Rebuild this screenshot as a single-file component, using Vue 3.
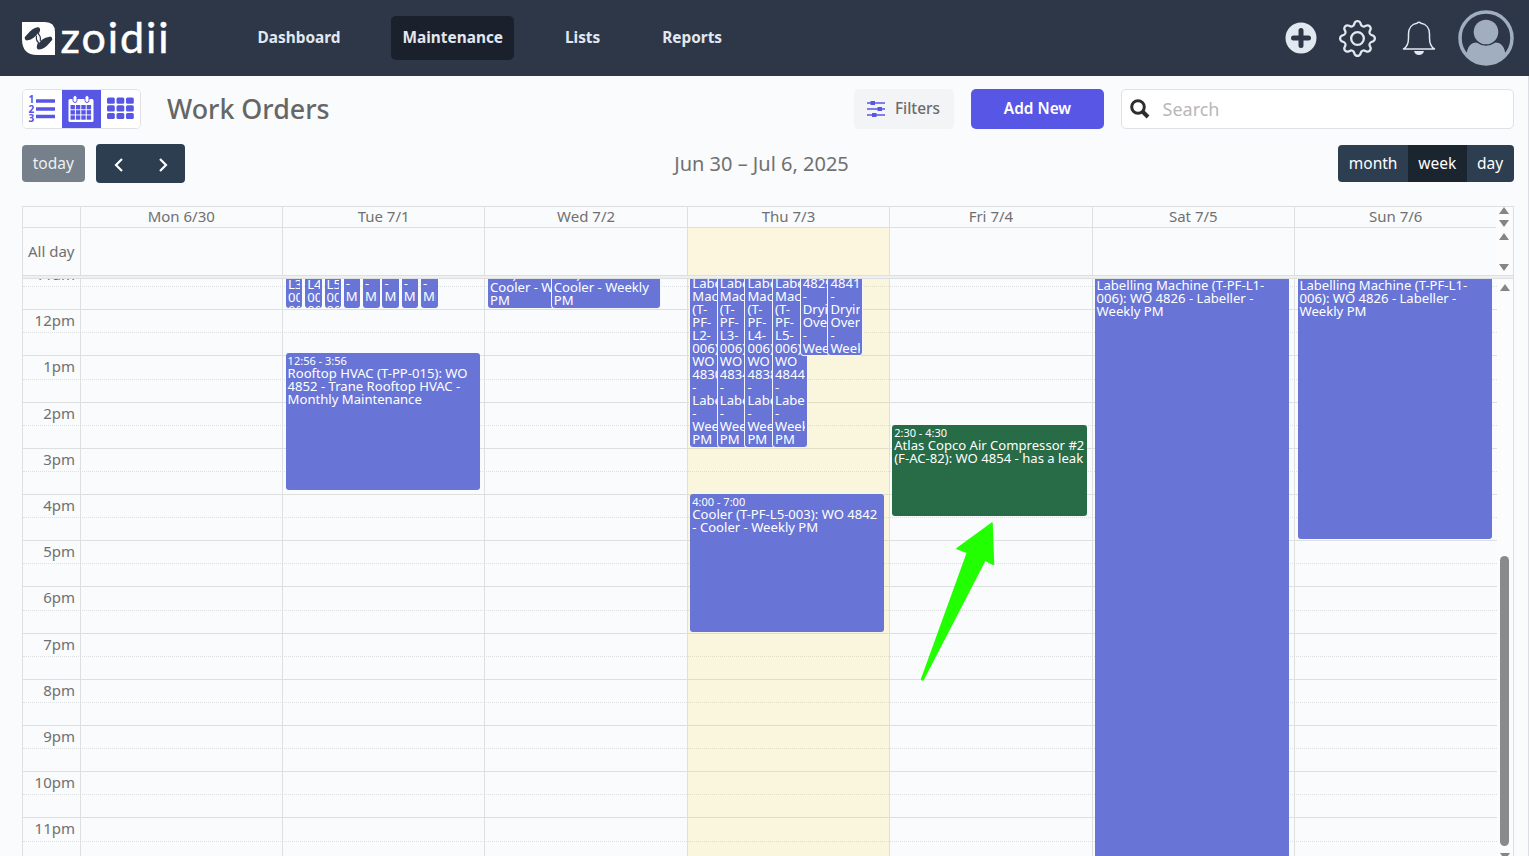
<template>
  <div class="page">
    <header class="topbar">
      <div class="logo">
        <svg class="logo-mark" viewBox="0 0 33 33">
          <path d="M0 0H23Q33 0 33 10V33H15Q0 33 0 17Z" fill="#fff" />
          <g fill="none" stroke="#2d3748" stroke-linecap="round" stroke-linejoin="round">
            <path d="M5 16C8 13.500 10 8.500 15.800 7.500C13 11 11.500 15.500 5 16" stroke-width="4.600" />
            <path d="M28 17C25 19.500 23 24.500 17 25.300C19.500 21.500 21.500 17.500 28 17" stroke-width="4.600" />
            <path d="M17.500 8L16.200 12Q19 14 18.300 18.500M15.500 24L16.500 20.500Q13.700 18.500 14.500 14" stroke-width="1.200" />
          </g>
        </svg>
        <span class="logo-text">zoidii</span>
      </div>
      <nav class="nav">
        <a v-for="item in navItems" :key="item" class="nav-item" :class="{ active: item === 'Maintenance' }">{{ item }}</a>
      </nav>
      <div class="top-icons">
        <svg class="icon-plus" viewBox="0 0 32 32">
          <circle cx="16" cy="16" r="15.500" fill="#e2e8f0" />
          <path d="M16 8.500V23.500M8.500 16H23.500" stroke="#2d3748" stroke-width="5" stroke-linecap="round" />
        </svg>
        <svg class="icon-gear" viewBox="0 0 16 16" fill="#e2e8f0">
          <path d="M8 4.754a3.246 3.246 0 1 0 0 6.492 3.246 3.246 0 0 0 0-6.492M5.754 8a2.246 2.246 0 1 1 4.492 0 2.246 2.246 0 0 1-4.492 0" />
          <path d="M9.796 1.343c-.527-1.790-3.065-1.790-3.592 0l-.094.319a.873.873 0 0 1-1.255.520l-.292-.160c-1.640-.892-3.433.902-2.540 2.541l.159.292a.873.873 0 0 1-.520 1.255l-.319.094c-1.790.527-1.790 3.065 0 3.592l.319.094a.873.873 0 0 1 .520 1.255l-.160.292c-.892 1.640.901 3.434 2.541 2.540l.292-.159a.873.873 0 0 1 1.255.520l.094.319c.527 1.790 3.065 1.790 3.592 0l.094-.319a.873.873 0 0 1 1.255-.520l.292.160c1.640.893 3.434-.902 2.540-2.541l-.159-.292a.873.873 0 0 1 .520-1.255l.319-.094c1.790-.527 1.790-3.065 0-3.592l-.319-.094a.873.873 0 0 1-.520-1.255l.160-.292c.893-1.640-.902-3.433-2.541-2.540l-.292.159a.873.873 0 0 1-1.255-.520zm-2.633.283c.246-.835 1.428-.835 1.674 0l.094.319a1.873 1.873 0 0 0 2.693 1.115l.291-.160c.764-.415 1.600.420 1.184 1.185l-.159.292a1.873 1.873 0 0 0 1.116 2.692l.318.094c.835.246.835 1.428 0 1.674l-.319.094a1.873 1.873 0 0 0-1.115 2.693l.160.291c.415.764-.420 1.600-1.185 1.184l-.291-.159a1.873 1.873 0 0 0-2.693 1.116l-.094.318c-.246.835-1.428.835-1.674 0l-.094-.319a1.873 1.873 0 0 0-2.692-1.115l-.292.160c-.764.415-1.600-.420-1.184-1.185l.159-.291A1.873 1.873 0 0 0 1.945 8.930l-.319-.094c-.835-.246-.835-1.428 0-1.674l.319-.094A1.873 1.873 0 0 0 3.060 4.377l-.160-.292c-.415-.764.420-1.600 1.185-1.184l.292.159a1.873 1.873 0 0 0 2.692-1.115z" />
        </svg>
        <svg class="icon-bell" viewBox="0 0 34 34">
          <path d="M1.500 28C5 26 6.500 23 6.500 17V13C6.500 7 10 3 15 2.300Q17 0 19 2.300C24 3 27.500 7 27.500 13V17C27.500 23 29 26 32.500 28Z" fill="none" stroke="#e2e8f0" stroke-width="1.500" stroke-linejoin="round" />
          <path d="M12 30H22Q21 34 17 34T12 30Z" fill="#e2e8f0" />
        </svg>
        <svg class="avatar" viewBox="0 0 56 56">
          <circle cx="28" cy="28" r="26" fill="none" stroke="#a0aec0" stroke-width="3.500" />
          <circle cx="28" cy="22" r="12.300" fill="#a0aec0" />
          <path d="M8.500 45C9 37 13 32.500 18.500 32.500Q28 39 37.500 32.500C43 32.500 47 37 47.500 45Q39 54 28 54T8.500 45Z" fill="#a0aec0" />
        </svg>
      </div>
    </header>

    <section class="toolbar">
      <div class="view-switch">
        <button class="view-btn">
          <svg class="view-icon" viewBox="0 0 28 28">
            <g fill="#5856e5" font-size="10" font-weight="700" font-family="Noto Sans, sans-serif">
              <text x="0.500" y="8">1</text>
              <text x="0.500" y="17.500">2</text>
              <text x="0.500" y="27">3</text>
            </g>
            <path d="M8 6H27M8 14H27M8 21.500H27" stroke="#5856e5" stroke-width="3.400" />
          </svg>
        </button>
        <button class="view-btn selected">
          <svg class="view-icon" viewBox="0 0 28 28">
            <rect x="1.500" y="4" width="25" height="23" rx="1.500" fill="#fff" />
            <rect x="6" y="0.500" width="4" height="7" rx="2" fill="#fff" stroke="#5856e5" />
            <rect x="18" y="0.500" width="4" height="7" rx="2" fill="#fff" stroke="#5856e5" />
            <g fill="#5856e5">
              <template v-for="r in 3" :key="r">
                <rect v-for="c in 4" :key="c" :x="c * 5.400 - 1.900" :y="r * 5.200 + 4.800" width="4.400" height="4.300" />
              </template>
            </g>
          </svg>
        </button>
        <button class="view-btn">
          <svg class="view-icon" viewBox="0 0 28 28" fill="#5856e5">
            <template v-for="r in 3" :key="r">
              <rect v-for="c in 3" :key="c" :x="c * 9.500 - 8.500" :y="r * 7.700 - 5.200" width="7.800" height="6.200" rx="1.500" />
            </template>
          </svg>
        </button>
      </div>
      <h1 class="title">Work Orders</h1>
      <button class="filters">
        <svg class="filter-icon" viewBox="0 0 18 18">
          <path d="M0 3H18M0 9H18M0 15H18" stroke="#5856e5" stroke-width="1.300" />
          <path d="M3.500 1H8V5H3.500ZM10.500 7H15V11H10.500ZM5 13H9.500V17H5Z" fill="#5856e5" />
        </svg>
        <span class="filters-text">Filters</span>
      </button>
      <button class="add-new">Add New</button>
      <div class="search">
        <svg class="search-icon" viewBox="0 0 20 20">
          <circle cx="8" cy="8" r="6.300" fill="none" stroke="#2d2d2d" stroke-width="3" />
          <path d="M12.500 12.500L18 18" stroke="#2d2d2d" stroke-width="4" />
        </svg>
        <input class="search-input" type="text" placeholder="Search" />
      </div>
    </section>

    <section class="cal-toolbar">
      <div class="cal-left">
        <button class="today">today</button>
        <div class="arrows">
          <svg class="chevron" viewBox="0 0 10 16"><path d="M8 2L2 8L8 14" /></svg>
          <svg class="chevron" viewBox="0 0 10 16"><path d="M2 2L8 8L2 14" /></svg>
        </div>
      </div>
      <h2 class="range">Jun 30 – Jul 6, 2025</h2>
      <div class="cal-right">
        <button v-for="v in ['month', 'week', 'day']" :key="v" class="mode" :class="{ active: v === 'week' }">{{ v }}</button>
      </div>
    </section>

    <section class="calendar">
      <div class="row head-row">
        <div class="axis"></div>
        <div v-for="(day, i) in days" :key="day" class="cell head-cell" :class="{ last: i === 6 }">{{ day }}</div>
        <div class="scroller">
          <i class="tri up"></i>
          <i class="tri down"></i>
        </div>
      </div>
      <div class="row allday-row">
        <div class="axis">All day</div>
        <div v-for="(day, i) in days" :key="day" class="cell" :class="{ today: i === 3, last: i === 6 }"></div>
        <div class="scroller allday-scroller">
          <i class="tri up"></i>
          <i class="tri down"></i>
        </div>
      </div>
      <div class="divider"></div>
      <div class="time-body">
        <div class="time-grid">
          <div class="slots">
            <div v-for="h in hours" :key="h" class="slot">
              <div class="slot-label">{{ h }}</div>
            </div>
          </div>
          <div class="day-cols">
            <div class="axis-gap"></div>
            <div v-for="(day, i) in days" :key="day" class="day-col" :class="{ today: i === 3, last: i === 6 }">
              <div v-for="(ev, k) in events[i]" :key="k" class="event" :class="[ev.kind, { stacked: ev.stacked }]" :style="place(ev)">
                <div v-if="ev.time" class="event-time">{{ ev.time }}</div>
                <div class="event-title">{{ ev.title }}</div>
              </div>
            </div>
          </div>
        </div>
        <div class="scroller body-scroller">
          <i class="tri up"></i>
          <div class="thumb"></div>
          <i class="tri down"></i>
        </div>
      </div>
    </section>

    <svg class="pointer" viewBox="0 0 76 160">
      <path d="M72 2L37 27.500L47.500 31.500L1.500 158.500L3 159L65 39.200L73.500 43.500Z" fill="#22ff00" stroke="#22ff00" stroke-width="1.500" stroke-linejoin="round" />
    </svg>
  </div>
</template>

<script setup>
const navItems = ['Dashboard', 'Maintenance', 'Lists', 'Reports']
const days = ['Mon 6/30', 'Tue 7/1', 'Wed 7/2', 'Thu 7/3', 'Fri 7/4', 'Sat 7/5', 'Sun 7/6']
const hours = ['11am', '12pm', '1pm', '2pm', '3pm', '4pm', '5pm', '6pm', '7pm', '8pm', '9pm', '10pm', '11pm']

const HOUR = 46.2

// left / width are pixels inside the day column, start / end are hours
const tueSmall = ['L3-', 'L4-', 'L5-', '-', '-', '-', '-', '-'].map((title, n) => ({
  start: n < 3 ? 11.3 : 11.28,
  end: 12,
  left: 3 + n * 19.3,
  width: 16.5,
  kind: 'narrow',
  title: title + (n < 3 ? '\n006\n006' : '\nMi'),
}))

const labellers = [['2', 4830], ['3', 4834], ['4', 4838], ['5', 4844]].map(([line, wo], n) => ({
  start: 10.99,
  end: 15,
  left: 2.5 + n * 27.6,
  width: 34,
  stacked: true,
  time: '11:00',
  title: `Labelling Machine (T-PF-L${line}-006): WO ${wo} - Labeller - Weekly PM`,
}))

const ovens = [4829, 4841].map((wo, n) => ({
  start: 10.99,
  end: 13.02,
  left: 113 + n * 27.7,
  width: 33.5,
  stacked: true,
  time: '11:00',
  title: `${wo} - Drying Oven - Weekly`,
}))

const events = [
  [],
  [
    ...tueSmall,
    { start: 12.95, end: 15.93, left: 2.7, width: 194.5, time: '12:56 - 3:56', title: 'Rooftop HVAC (T-PP-015): WO 4852 - Trane Rooftop HVAC - Monthly Maintenance' },
  ],
  [
    { start: 11.08, end: 12, left: 2.7, width: 110, kind: 'lines', title: '003): WO 4824 -\nCooler - Weekly\nPM' },
    { start: 11.08, end: 12, left: 66.5, width: 108, kind: 'lines', stacked: true, title: '003): WO 4832 -\nCooler - Weekly\nPM' },
  ],
  [
    ...labellers,
    ...ovens,
    { start: 16.01, end: 19, left: 2.5, width: 194, time: '4:00 - 7:00', title: 'Cooler (T-PF-L5-003): WO 4842 - Cooler - Weekly PM' },
  ],
  [
    { start: 14.51, end: 16.5, left: 2, width: 194.5, kind: 'green', time: '2:30 - 4:30', title: 'Atlas Copco Air Compressor #2 (F-AC-82): WO 4854 - has a leak' },
  ],
  [
    { start: 10, end: 24, left: 2, width: 194.5, kind: 'pinned', title: 'Labelling Machine (T-PF-L1-006): WO 4826 - Labeller - Weekly PM' },
  ],
  [
    { start: 10, end: 17, left: 2.5, width: 194.5, kind: 'pinned', title: 'Labelling Machine (T-PF-L1-006): WO 4826 - Labeller - Weekly PM' },
  ],
]

function place(ev) {
  return {
    top: (ev.start - 11) * HOUR + 'px',
    height: (ev.end - ev.start) * HOUR - 1 + 'px',
    left: ev.left + 'px',
    width: ev.width + 'px',
  }
}
</script>

<style>
body {
  margin: 0;
  background: #fafbfd;
}
</style>

<style scoped>
.page {
  position: relative;
  display: flex;
  flex-direction: column;
  box-sizing: border-box;
  height: 856px;
  overflow: hidden;
  background: #fafbfd;
  box-shadow: inset -1px 0 0 #dcdee2;
  color: #707070;
  font-family: 'Noto Sans', sans-serif;
}

.page *,
.page *::before {
  box-sizing: border-box;
}

button {
  border: none;
  padding: 0;
  font-family: inherit;
}

/* top bar */
.topbar {
  display: flex;
  align-items: center;
  flex-shrink: 0;
  height: 76px;
  padding: 0 15px 0 21.5px;
  background: #2d3748;
}

.logo {
  display: flex;
  align-items: center;
  width: 224.7px;
}

.logo-mark {
  width: 33px;
  height: 33px;
}

.logo-text {
  margin: -3px 0 0 6px;
  color: #fff;
  font-family: Lato, sans-serif;
  font-size: 43px;
  line-height: 50px;
  letter-spacing: 1.9px;
  -webkit-text-stroke: 0.5px #fff;
}

.nav {
  display: flex;
  gap: 39.3px;
}

.nav-item {
  height: 44px;
  padding: 0 11.3px;
  border-radius: 5px;
  color: #e2e8f0;
  font-size: 15.4px;
  font-weight: 700;
  line-height: 43px;
}

.nav-item.active {
  background: #1a202c;
}

.top-icons {
  display: flex;
  align-items: center;
  margin-left: auto;
}

.icon-plus {
  width: 32px;
  height: 32px;
  margin-right: 21.5px;
}

.icon-gear {
  width: 37px;
  height: 37px;
  margin-right: 26px;
}

.icon-bell {
  width: 34px;
  height: 34px;
  margin-right: 22.5px;
}

.avatar {
  width: 56px;
  height: 56px;
}

/* toolbar */
.toolbar {
  display: flex;
  align-items: center;
  flex-shrink: 0;
  height: 40px;
  margin: 13px 15.5px 0 21.5px;
}

.view-switch {
  display: flex;
  width: 119px;
  height: 40px;
  border: 1px solid #dfe1e6;
  border-radius: 5px;
  background: #fff;
  overflow: hidden;
}

.view-btn {
  display: flex;
  flex: 1;
  align-items: center;
  justify-content: center;
  background: #fff;
}

.view-btn.selected {
  background: #5856e5;
}

.view-icon {
  width: 28px;
  height: 28px;
}

.title {
  margin: 0 auto 0 26.5px;
  color: #666;
  font-size: 26.8px;
  font-weight: 500;
  line-height: 40px;
}

.filters {
  display: flex;
  align-items: center;
  justify-content: center;
  gap: 10px;
  width: 100px;
  height: 40px;
  margin-right: 17.5px;
  border-radius: 5px;
  background: #f3f4f6;
  color: #6b6b6b;
  font-size: 15.4px;
  font-weight: 500;
}

.filters-text {
  padding-bottom: 2px;
}

.filter-icon {
  width: 18px;
  height: 18px;
}

.add-new {
  width: 133px;
  height: 40px;
  margin-right: 17px;
  padding-bottom: 2px;
  border-radius: 5px;
  background: #5856e5;
  color: #fff;
  font-size: 15.4px;
  font-weight: 600;
}

.search {
  display: flex;
  align-items: center;
  width: 392.5px;
  height: 40px;
  padding-left: 8px;
  border: 1px solid #dfe1e6;
  border-radius: 5px;
  background: #fff;
}

.search-icon {
  width: 20px;
  height: 20px;
}

.search-input {
  flex: 1;
  min-width: 0;
  padding: 0 12.5px;
  border: none;
  outline: none;
  background: none;
  font-family: inherit;
  font-size: 18px;
}

.search-input::placeholder {
  color: #b8b8b8;
}

/* calendar toolbar */
.cal-toolbar {
  display: grid;
  grid-template-columns: 1fr auto 1fr;
  align-items: center;
  flex-shrink: 0;
  height: 40px;
  margin: 14px 15.5px 0 21.5px;
}

.cal-left {
  display: flex;
  align-items: center;
  gap: 10.5px;
}

.cal-left .today {
  width: 63.5px;
  height: 37px;
  border-radius: 4px;
  background: #75808a;
  color: #eef0f2;
  font-size: 15.5px;
}

.arrows {
  display: flex;
  align-items: center;
  justify-content: space-between;
  width: 89px;
  height: 39px;
  padding: 3px 17px 0 18px;
  border-radius: 4px;
  background: #2c3e50;
}

.chevron {
  width: 10px;
  height: 16px;
  fill: none;
  stroke: #fff;
  stroke-width: 2.2;
}

.range {
  margin: 0 12px 0 0;
  font-size: 20px;
  font-weight: 400;
}

.cal-right {
  display: flex;
  justify-self: end;
  border-radius: 4px;
  overflow: hidden;
}

.mode {
  height: 37px;
  padding: 0 10.4px;
  background: #2c3e50;
  color: #fff;
  font-size: 15.5px;
}

.mode.active {
  background: #1a252f;
}

/* calendar */
.calendar {
  display: flex;
  flex: 1;
  flex-direction: column;
  min-height: 0;
  margin: 23px 15.5px 0 21.5px;
  border: 1px solid #dddfe1;
  border-bottom: none;
  font-size: 15px;
}

.row {
  display: flex;
  flex-shrink: 0;
}

.head-row {
  height: 21px;
}

.allday-row {
  height: 47px;
}

.axis {
  display: flex;
  align-items: center;
  justify-content: flex-end;
  width: 58px;
  padding: 0 5px 1px 0;
  border-right: 1px solid #dddfe1;
}

.head-row .axis,
.head-cell {
  border-bottom: 1px solid #dddfe1;
}

.cell {
  flex: 1;
  border-right: 1px solid #dddfe1;
  line-height: 19px;
  text-align: center;
}

.cell.last,
.day-col.last {
  border-right: none;
}

.cell.today {
  background: #fbf6dd;
}

.scroller {
  display: flex;
  flex-direction: column;
  align-items: center;
  justify-content: space-between;
  flex-shrink: 0;
  width: 16px;
  padding: 0 0 1px;
  background: #fcfcfd;
}

.allday-scroller {
  padding: 5px 0 4px;
}

.tri {
  flex-shrink: 0;
  width: 0;
  height: 0;
  border: 5px solid transparent;
}

.tri.up {
  border-top: none;
  border-bottom: 7px solid #858585;
}

.tri.down {
  border-bottom: none;
  border-top: 7px solid #858585;
}

.divider {
  flex-shrink: 0;
  height: 4px;
  border: 1px solid #dddfe1;
  border-width: 1px 0;
  background: #eeeff0;
}

.time-body {
  display: flex;
  flex: 1;
  min-height: 0;
  overflow: hidden;
}

.time-grid {
  position: relative;
  flex: 1;
  margin-top: -16px;
  height: 600.6px;
}

.slot {
  height: 46.2px;
  border-top: 1px solid #dddfe1;
}

.slot-label {
  height: 22.3px;
  padding-right: 5.5px;
  width: 58px;
  line-height: 21px;
  text-align: right;
}

.slot::after {
  content: '';
  display: block;
  border-top: 1px dotted #dddfe1;
}

.day-cols {
  position: absolute;
  inset: 0;
  display: flex;
}

.axis-gap {
  width: 58px;
  border-right: 1px solid #dddfe1;
}

.day-col {
  position: relative;
  flex: 1;
  border-right: 1px solid #dddfe1;
}

.day-col.today {
  background: rgba(255, 220, 40, 0.15);
}

.event {
  position: absolute;
  padding: 1px 0 0 2px;
  border-radius: 3px;
  overflow: hidden;
  background: #6875d6;
  color: #fff;
  font-size: 13.1px;
  line-height: 13px;
}

.event.green {
  background: #276b47;
}

.event.stacked {
  box-shadow: 0 0 0 1px #f5f6fc;
}

.event.stacked .event-title,
.event.narrow .event-title {
  margin-right: 2px;
  overflow: hidden;
}

.event.pinned {
  padding-top: 62px;
}

.event.lines,
.event.narrow {
  white-space: pre;
}

.event-time {
  font-size: 11px;
  line-height: 13px;
  white-space: nowrap;
}

/* scrollbar */
.body-scroller {
  justify-content: flex-start;
  padding-top: 5px;
}

.thumb {
  flex-shrink: 0;
  width: 9px;
  height: 290px;
  margin: 265px 0 7px;
  border-radius: 5px;
  background: #8a8a8a;
}

.pointer {
  position: absolute;
  top: 520.5px;
  left: 920px;
  width: 76px;
  height: 160px;
}
</style>
